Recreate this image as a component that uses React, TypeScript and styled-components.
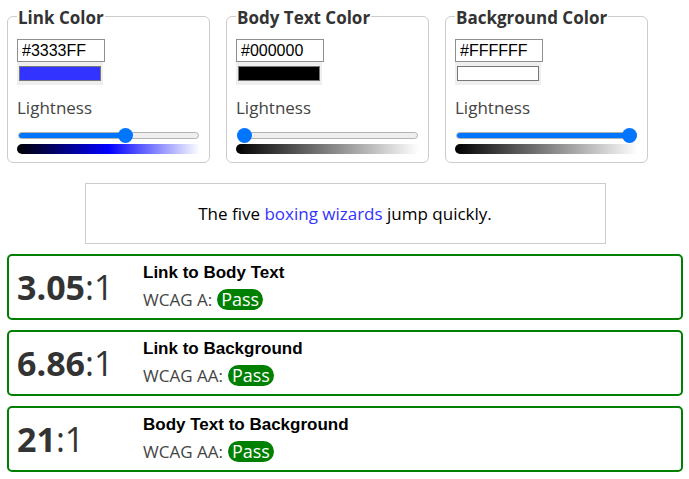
import React from 'react'
import styled, { createGlobalStyle } from 'styled-components'

const GlobalStyle = createGlobalStyle`
  body {
    margin: 0;
    background: #fff;
    font-family: "Open Sans", "DejaVu Sans", sans-serif;
    color: #333;
  }
`

const Page = styled.div`
  padding: 6px 6px 8px 7px;
`

const Controls = styled.div`
  display: flex;
  gap: 16px;
`

const Fieldset = styled.fieldset`
  width: 203px;
  box-sizing: border-box;
  margin: 0;
  padding: 0 9px 8px;
  border: 1px solid #ccc;
  border-radius: 6px;
  min-width: 0;
`

const Legend = styled.legend`
  padding: 4px 1px 0;
  font-size: 17px;
  font-weight: 700;
  color: #333;
  line-height: 16px;
`

const HexInput = styled.input`
  display: block;
  margin-top: 13px;
  width: 88px;
  height: 23px;
  box-sizing: border-box;
  padding: 0 4px;
  border: 1px solid #8f8f8f;
  font-family: "Liberation Sans", Arial, sans-serif;
  font-size: 16px;
  color: #000;
  outline: none;
`

const SwatchWell = styled.div`
  width: 86px;
  height: 23px;
  box-sizing: border-box;
  padding: 4px 2px;
  background: #efefef;
`

const Swatch = styled.div<{ $color: string }>`
  height: 100%;
  box-sizing: border-box;
  border: 1px solid #777;
  background: ${p => p.$color};
`

const Label = styled.div`
  margin-top: 11px;
  font-size: 17px;
  line-height: 23px;
  color: #444;
`

const Slider = styled.div`
  position: relative;
  margin: 9px 1px 0;
  height: 15px;
  display: flex;
  align-items: center;
`

const Track = styled.div`
  flex: 1;
  height: 7px;
  box-sizing: border-box;
  border: 1px solid #b2b2b2;
  border-radius: 4px;
  background: #efefef;
  overflow: hidden;
`

const Fill = styled.div`
  height: 100%;
  background: #0075ff;
`

const Thumb = styled.div`
  position: absolute;
  top: 0;
  width: 15px;
  height: 15px;
  border-radius: 50%;
  background: #0075ff;
`

const Gradient = styled.div<{ $to: string }>`
  margin-top: 1px;
  height: 10px;
  border-radius: 5px 0 0 5px;
  background: ${p => p.$to};
`

const Sample = styled.div`
  width: 521px;
  box-sizing: border-box;
  margin: 20px auto 0;
  padding: 18px 0;
  border: 1px solid #ccc;
  text-align: center;
  font-size: 17px;
  line-height: 23px;
  color: #000;
`

const SampleLink = styled.span`
  color: #3333ff;
`

const Results = styled.div`
  margin-top: 10px;
  display: flex;
  flex-direction: column;
  gap: 10px;
`

const Card = styled.div`
  display: grid;
  grid-template-columns: 126px 1fr;
  align-items: center;
  height: 66px;
  box-sizing: border-box;
  padding: 0 8px;
  border: 2px solid #008000;
  border-radius: 5px;
`

const Ratio = styled.div`
  font-size: 34px;
  line-height: 48px;
  color: #333;
  b {
    font-weight: 700;
  }
`

const Info = styled.div`
  display: flex;
  flex-direction: column;
  gap: 5px;
`

const Title = styled.div`
  font-family: "Liberation Sans", Arial, sans-serif;
  font-weight: 700;
  font-size: 17px;
  line-height: 20px;
  color: #000;
`

const Level = styled.div`
  font-size: 17px;
  line-height: 23px;
  color: #444;
  display: flex;
  align-items: center;
  gap: 5px;
`

const Badge = styled.span`
  display: inline-block;
  padding: 0 4px;
  height: 21px;
  line-height: 21px;
  border-radius: 11px;
  background: #008000;
  color: #fff;
  font-size: 18px;
`

type ColorControl = {
  label: string
  hex: string
  lightness: number
  gradient: string
}

const controls: ColorControl[] = [
  {
    label: 'Link Color',
    hex: '#3333FF',
    lightness: 0.6,
    gradient: 'linear-gradient(to right, #000 0%, #0000ff 50%, #fff 100%)',
  },
  {
    label: 'Body Text Color',
    hex: '#000000',
    lightness: 0,
    gradient: 'linear-gradient(to right, #000 0%, #fff 100%)',
  },
  {
    label: 'Background Color',
    hex: '#FFFFFF',
    lightness: 1,
    gradient: 'linear-gradient(to right, #000 0%, #fff 100%)',
  },
]

const results = [
  { ratio: '3.05', title: 'Link to Body Text', level: 'WCAG A:' },
  { ratio: '6.86', title: 'Link to Background', level: 'WCAG AA:' },
  { ratio: '21', title: 'Body Text to Background', level: 'WCAG AA:' },
]

const TRACK = 181
const THUMB = 15

const App = () => {
  return (
    <Page>
      <GlobalStyle />
      <Controls>
        {controls.map(c => {
          const x = c.lightness * (TRACK - THUMB)
          return (
            <Fieldset key={c.label}>
              <Legend>{c.label}</Legend>
              <HexInput defaultValue={c.hex} />
              <SwatchWell>
                <Swatch $color={c.hex} />
              </SwatchWell>
              <Label>Lightness</Label>
              <Slider>
                <Track>
                  <Fill style={{ width: x + THUMB / 2 }} />
                </Track>
                <Thumb style={{ left: x }} />
              </Slider>
              <Gradient $to={c.gradient} />
            </Fieldset>
          )
        })}
      </Controls>

      <Sample>
        The five <SampleLink>boxing wizards</SampleLink> jump quickly.
      </Sample>

      <Results>
        {results.map(r => (
          <Card key={r.title}>
            <Ratio>
              <b>{r.ratio}</b>:1
            </Ratio>
            <Info>
              <Title>{r.title}</Title>
              <Level>
                {r.level} <Badge>Pass</Badge>
              </Level>
            </Info>
          </Card>
        ))}
      </Results>
    </Page>
  )
}

export default App
